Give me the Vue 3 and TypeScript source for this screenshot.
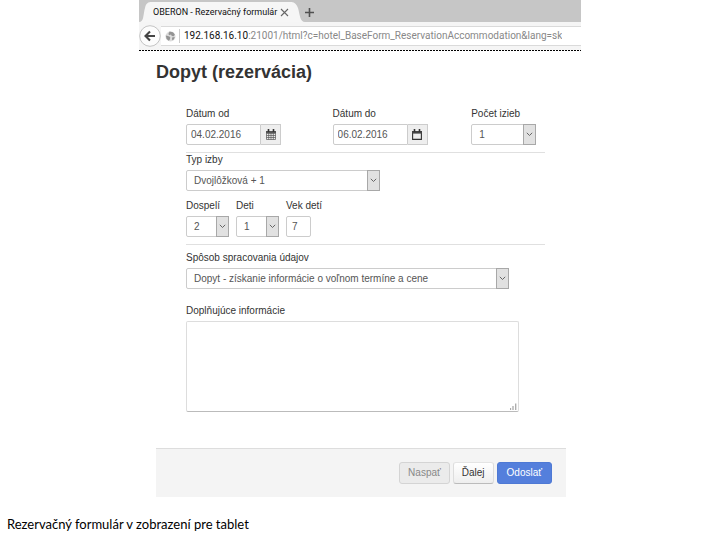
<script setup lang="ts">
import { ref } from 'vue'

const dateFrom = ref('04.02.2016')
const dateTo = ref('06.02.2016')
const rooms = ref('1')
const roomType = ref('Dvojlôžková + 1')
const adults = ref('2')
const children = ref('1')
const childAge = ref('7')
const method = ref('Dopyt - získanie informácie o voľnom termíne a cene')
const notes = ref('')
const counts = ['1', '2', '3', '4']
</script>

<template>
  <div class="page">
    <main class="window">
      <div class="tabs">
        <div class="tab">
          <svg class="tab-shape" viewBox="0 0 166 22" preserveAspectRatio="none" aria-hidden="true">
            <path d="M0 22C5 22 4 15 6 8C7 3 9 2 13 2H151C155 2 157 3 159 8C161 15 161 22 166 22Z" fill="#f6f6f6" />
          </svg>
          <span class="tab-title">OBERON - Rezervačný formulár</span>
          <button class="plain" type="button" aria-label="Zavrieť kartu">
            <svg width="9" height="9" viewBox="0 0 9 9"><path d="M1 1L8 8M8 1L1 8" stroke="#666" stroke-width="1.1" /></svg>
          </button>
        </div>
        <button class="plain new-tab" type="button" aria-label="Nová karta">
          <svg width="9" height="9" viewBox="0 0 9 9"><path d="M4.5 0V9M0 4.5H9" stroke="#505050" stroke-width="1.6" /></svg>
        </button>
      </div>

      <div class="nav">
        <button class="plain back" type="button" aria-label="Späť">
          <svg width="22" height="22" viewBox="0 0 22 22">
            <circle cx="11" cy="11" r="10.3" fill="#fcfcfc" stroke="#c4c4c4" />
            <path d="M16 11H7M11 6.5L6.5 11L11 15.5" fill="none" stroke="#444" stroke-width="2.1" />
          </svg>
        </button>
        <div class="address">
          <svg width="11" height="11" viewBox="0 0 11 11" aria-hidden="true">
            <circle cx="5.5" cy="5.5" r="5" fill="#dcdcdc" />
            <path d="M4.5 .6L8 1.2L9.8 3.5L8.8 5.2L6.8 5L6 3.6L4.2 4.2L3.4 3ZM.8 4.4L3 5L5.2 6L5 8.2L3.8 9.8L1.6 8ZM7 6.4L9.8 6L8.8 8.6L7.2 9.2Z" fill="#949494" />
          </svg>
          <span class="url"><b>192.168.16.10</b>:21001/html?c=hotel_BaseForm_ReservationAccommodation&amp;lang=sk</span>
        </div>
      </div>
      <div class="dots"></div>

      <form class="content" @submit.prevent>
        <h1>Dopyt (rezervácia)</h1>
        <div class="fields">
          <div class="row dates">
            <div class="field">
              <label for="from">Dátum od</label>
              <div class="date">
                <input id="from" v-model="dateFrom" type="text" />
                <button type="button" aria-label="Vybrať dátum od">
                  <svg width="10" height="11" viewBox="0 0 10 11">
                    <path d="M.5 2.5H9.5V10.5H.5ZM.5 4.5H9.5M.5 6.5H9.5M.5 8.5H9.5M2.7 4V10.5M5 4V10.5M7.3 4V10.5" fill="none" stroke="#555" stroke-width=".7" />
                    <path d="M0 2H10V4H0Z" fill="#555" /><path d="M2.5 0V3M7.5 0V3" stroke="#333" stroke-width="1.6" />
                  </svg>
                </button>
              </div>
            </div>
            <div class="field">
              <label for="to">Dátum do</label>
              <div class="date">
                <input id="to" v-model="dateTo" type="text" />
                <button type="button" aria-label="Vybrať dátum do">
                  <svg width="10" height="11" viewBox="0 0 10 11">
                    <path d="M.6 2.5H9.4V10.4H.6Z" fill="none" stroke="#333" stroke-width="1.1" />
                    <path d="M0 2H10V4.6H0Z" fill="#444" /><path d="M2.5 0V3M7.5 0V3" stroke="#333" stroke-width="1.6" />
                  </svg>
                </button>
              </div>
            </div>
            <div class="field">
              <label for="rooms">Počet izieb</label>
              <div class="select medium">
                <select id="rooms" v-model="rooms"><option v-for="n in counts" :key="n">{{ n }}</option></select>
                <span class="arrow"><svg width="7" height="5" viewBox="0 0 7 5"><path d="M.8 .8L3.5 3.5L6.2 .8" /></svg></span>
              </div>
            </div>
          </div>

          <div class="field type">
            <label for="type">Typ izby</label>
            <div class="select wide">
              <select id="type" v-model="roomType"><option>Dvojlôžková + 1</option></select>
              <span class="arrow"><svg width="7" height="5" viewBox="0 0 7 5"><path d="M.8 .8L3.5 3.5L6.2 .8" /></svg></span>
            </div>
          </div>

          <div class="row people">
            <div class="field">
              <label for="adults">Dospelí</label>
              <div class="select small">
                <select id="adults" v-model="adults"><option v-for="n in counts" :key="n">{{ n }}</option></select>
                <span class="arrow"><svg width="7" height="5" viewBox="0 0 7 5"><path d="M.8 .8L3.5 3.5L6.2 .8" /></svg></span>
              </div>
            </div>
            <div class="field">
              <label for="children">Deti</label>
              <div class="select small">
                <select id="children" v-model="children"><option v-for="n in counts" :key="n">{{ n }}</option></select>
                <span class="arrow"><svg width="7" height="5" viewBox="0 0 7 5"><path d="M.8 .8L3.5 3.5L6.2 .8" /></svg></span>
              </div>
            </div>
            <div class="field">
              <label for="age">Vek detí</label>
              <input id="age" v-model="childAge" class="age" type="text" />
            </div>
          </div>

          <div class="field method">
            <label for="method">Spôsob spracovania údajov</label>
            <div class="select full">
              <select id="method" v-model="method"><option>Dopyt - získanie informácie o voľnom termíne a cene</option></select>
              <span class="arrow"><svg width="7" height="5" viewBox="0 0 7 5"><path d="M.8 .8L3.5 3.5L6.2 .8" /></svg></span>
            </div>
          </div>

          <div class="field notes">
            <label for="notes">Doplňujúce informácie</label>
            <div class="area">
              <textarea id="notes" v-model="notes"></textarea>
              <svg class="grip" width="7" height="7" viewBox="0 0 7 7" aria-hidden="true"><path d="M.5 7V5M3 7V3M5.7 7V.5" stroke="#aaa" stroke-width="1.3" /></svg>
            </div>
          </div>
        </div>

        <div class="actions">
          <button class="btn" type="button" disabled>Naspať</button>
          <button class="btn next" type="button">Ďalej</button>
          <button class="btn send" type="submit">Odoslať</button>
        </div>
      </form>
    </main>
    <p class="caption">Rezervačný formulár v zobrazení pre tablet</p>
  </div>
</template>

<style>
body {
  margin: 0;
  background: #fff;
}
</style>

<style scoped>
* {
  box-sizing: border-box;
}
.page {
  font-family: "Liberation Sans", Arial, sans-serif;
  font-size: 10px;
  color: #333;
}
.window {
  margin: 0 139px;
}
.plain {
  display: flex;
  padding: 0;
  border: 0;
  background: none;
}
.tabs {
  display: flex;
  align-items: center;
  height: 22px;
  background: #c6c6c6;
}
.tab {
  position: relative;
  display: flex;
  align-items: center;
  justify-content: space-between;
  width: 166px;
  height: 22px;
  padding: 2px 16px 0 14px;
}
.tab-shape {
  position: absolute;
  inset: 0;
  width: 100%;
  height: 100%;
}
.tab-title,
.tab .plain {
  position: relative;
}
.tab-title {
  font: 9px/16px Roboto, "Open Sans", sans-serif;
  color: #111;
  white-space: nowrap;
}
.new-tab {
  padding-top: 3px;
}
.nav {
  display: flex;
  align-items: center;
  height: 28px;
  background: #f5f5f5;
}
.back {
  position: relative;
  z-index: 1;
}
.address {
  display: flex;
  flex: 1;
  align-items: center;
  gap: 3px;
  min-width: 0;
  height: 20px;
  padding-left: 4px;
  border-top: 1px solid #dadada;
  border-bottom: 1px solid #dadada;
  background: #fff;
}
.url {
  overflow: hidden;
  padding-left: 4px;
  font: 10px/14px Roboto, "Open Sans", sans-serif;
  color: #888;
  white-space: nowrap;
  border-left: 1px solid #ccc;
}
.url b {
  font-weight: 400;
  color: #111;
}
.dots {
  height: 1px;
  background: repeating-linear-gradient(90deg, #000 0 2px, #fff 2px 3px);
}
.content {
  padding: 10px 15px 0 17px;
}
h1 {
  margin: 0;
  font-size: 18px;
  line-height: 22px;
  color: #333;
}
.fields {
  padding: 24px 21px 0 30px;
}
.row {
  display: grid;
  border-bottom: 1px solid #e0e0e0;
}
.dates {
  grid-template-columns: 147fr 139fr 74fr;
  padding-bottom: 7px;
}
.people {
  grid-template-columns: 43px 43px 1fr;
  gap: 7px;
  padding: 8px 0 7px;
}
.field {
  min-width: 0;
}
label {
  display: block;
  height: 17px;
  font-size: 10px;
  line-height: 14px;
  white-space: nowrap;
}
input,
select,
textarea {
  margin: 0;
  font: 10px/12px "Liberation Sans", Arial, sans-serif;
  color: #555;
  border: 1px solid #ccc;
  border-radius: 2px;
  background: #fff;
}
.date {
  display: flex;
  width: 95px;
  height: 21px;
}
.date input {
  flex: 1;
  min-width: 0;
  padding: 0 4px;
  border-radius: 2px 0 0 2px;
}
.date button {
  display: flex;
  align-items: center;
  justify-content: center;
  width: 20px;
  padding: 0;
  border: 1px solid #ccc;
  border-left: 0;
  background: #eee;
}
.select {
  position: relative;
  height: 21px;
}
select {
  display: block;
  width: 100%;
  height: 21px;
  padding: 0 16px 0 7px;
  appearance: none;
}
.arrow {
  position: absolute;
  top: 0;
  right: 0;
  display: flex;
  align-items: center;
  justify-content: center;
  width: 13px;
  height: 21px;
  border: 1px solid #a8a8a8;
  background: #e1e1e1;
  pointer-events: none;
}
.arrow path {
  fill: none;
  stroke: #666;
}
.medium {
  width: 65px;
}
.small {
  width: 43px;
}
.wide {
  width: 194px;
}
.full {
  max-width: 323px;
}
.age {
  display: block;
  width: 25px;
  height: 21px;
  padding: 0 5px;
}
.method {
  padding-top: 6px;
}
.notes {
  padding-top: 15px;
}
.area {
  position: relative;
  max-width: 333px;
}
textarea {
  display: block;
  width: 100%;
  height: 91px;
  border-color: #ddd #ddd #bbb;
  resize: none;
}
.grip {
  position: absolute;
  right: 2px;
  bottom: 2px;
}
.actions {
  display: flex;
  justify-content: flex-end;
  gap: 3px;
  margin-top: 36px;
  padding: 13px 14px;
  border-top: 1px solid #ddd;
  background: #f4f4f4;
}
.btn {
  height: 22px;
  padding: 0 8px;
  font: 10px/20px "Liberation Sans", Arial, sans-serif;
  color: #333;
  border: 1px solid #d4d4d4;
  border-radius: 3px;
  background: linear-gradient(#fff, #eee);
}
.btn:disabled {
  color: #888;
  background: #ebebeb;
}
.next {
  border-color: #e4e4e4 #ddd #bbb;
}
.send {
  padding: 0 9px;
  color: #fff;
  border-color: #4e79d4;
  background: #547fdc;
}
.caption {
  margin: 0;
  padding: 17px 7px 0;
  font: 13px/20px Lato, "Open Sans", sans-serif;
  color: #000;
}
</style>
